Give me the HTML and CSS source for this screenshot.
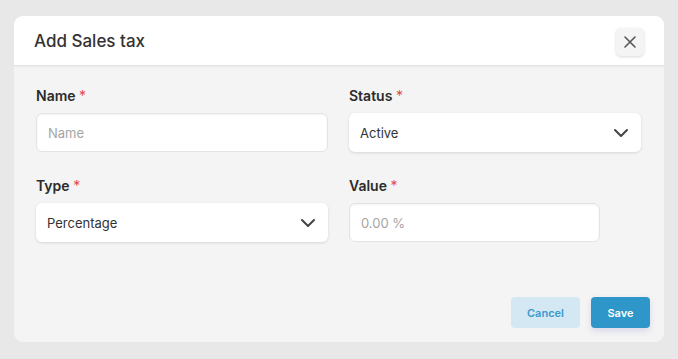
FILE: index.html
```html
<!DOCTYPE html>
<html lang="en">
<head>
    <meta charset="UTF-8">
    <meta name="viewport" content="width=device-width, initial-scale=1.0">
    <title>Add Sales tax</title>
    <link rel="stylesheet" href="styles.css">
</head>
<body>
    <div class="modal">
        <div class="modal-header">
            <h2>Add Sales tax</h2>
            <button class="close-btn" aria-label="Close">
                <svg width="14" height="14" viewBox="0 0 14 14"><path d="M2 2 L12 12 M12 2 L2 12" stroke="#555" stroke-width="1.6" fill="none" stroke-linecap="round"/></svg>
            </button>
        </div>
        <div class="modal-body">
            <div class="form-grid">
                <div class="field">
                    <label>Name <span class="req">*</span></label>
                    <div class="input placeholder">Name</div>
                </div>
                <div class="field">
                    <label>Status <span class="req">*</span></label>
                    <div class="input select">
                        <span>Active</span>
                        <svg width="16" height="10" viewBox="0 0 16 10"><path d="M2 2 L8 8 L14 2" stroke="#444" stroke-width="2" fill="none" stroke-linecap="round" stroke-linejoin="round"/></svg>
                    </div>
                </div>
                <div class="field">
                    <label>Type <span class="req">*</span></label>
                    <div class="input select">
                        <span>Percentage</span>
                        <svg width="16" height="10" viewBox="0 0 16 10"><path d="M2 2 L8 8 L14 2" stroke="#444" stroke-width="2" fill="none" stroke-linecap="round" stroke-linejoin="round"/></svg>
                    </div>
                </div>
                <div class="field">
                    <label>Value <span class="req">*</span></label>
                    <div class="input placeholder short">0.00 %</div>
                </div>
            </div>
            <div class="actions">
                <button class="btn cancel">Cancel</button>
                <button class="btn save">Save</button>
            </div>
        </div>
    </div>
</body>
</html>
```
FILE: styles.css
```css
body {
    margin: 0;
    padding: 16px 14px 0 14px;
    background: #e8e8e8;
    font-family: Inter, "Noto Sans", sans-serif;
    color: #2b2b2b;
}
.modal {
    width: 650px;
    border-radius: 9px;
    overflow: hidden;
    background: #f4f4f4;
}
.modal-header {
    background: #fff;
    height: 49px;
    display: flex;
    align-items: center;
    justify-content: space-between;
    padding: 0 20px 0 20px;
    border-bottom: 1px solid #e2e2e2;
    box-shadow: 0 1px 2px rgba(0,0,0,0.05);
}
.modal-header h2 {
    margin: 0;
    font-size: 17px;
    font-weight: 500;
    color: #333;
}
.close-btn {
    width: 28px;
    height: 28px;
    border: none;
    border-radius: 5px;
    background: #f4f4f4;
    box-shadow: 0 1px 3px rgba(0,0,0,0.15);
    display: flex;
    align-items: center;
    justify-content: center;
    padding: 0;
    margin-top: 2px;
}
.modal-body {
    padding: 21px 22px 14px 22px;
}
.form-grid {
    display: grid;
    grid-template-columns: 292px 292px;
    column-gap: 21px;
    row-gap: 25px;
}
.field label {
    display: block;
    font-size: 14px;
    font-weight: 600;
    color: #2b2b2b;
    margin-bottom: 9px;
}
.req {
    color: #e5484d;
    font-weight: 400;
}
.input {
    height: 39px;
    box-sizing: border-box;
    background: #fff;
    border-radius: 6px;
    font-size: 13px;
    display: flex;
    align-items: center;
    padding: 0 11px;
}
.placeholder {
    color: #a5a5a5;
    border: 1px solid #e3e3e3;
    box-shadow: inset 0 1px 2px rgba(0,0,0,0.05);
}
.select {
    justify-content: space-between;
    color: #333;
    box-shadow: 0 1px 3px rgba(0,0,0,0.12);
    padding-right: 12px;
}
.short {
    width: 251px;
}
.actions {
    display: flex;
    justify-content: flex-end;
    gap: 11px;
    margin-top: 55px;
    margin-right: -8px;
}
.btn {
    height: 31px;
    border: none;
    border-radius: 4px;
    font-family: Inter, "Noto Sans", sans-serif;
    font-size: 11px;
    font-weight: 600;
}
.cancel {
    width: 69px;
    background: #d4e8f4;
    color: #3a99cc;
}
.save {
    width: 59px;
    background: #2e96c8;
    color: #fff;
    box-shadow: 0 3px 6px rgba(60,60,180,0.15);
}
```
